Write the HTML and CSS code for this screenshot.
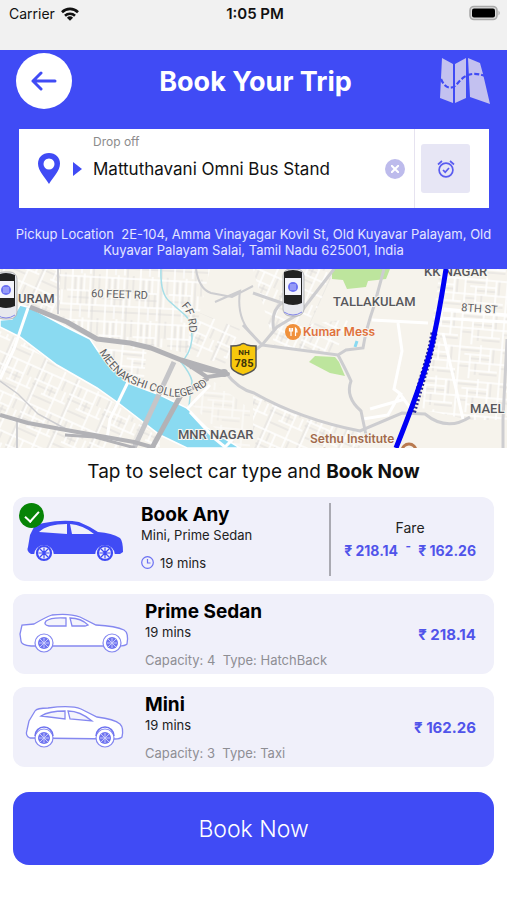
FILE: index.html
```html
<!DOCTYPE html>
<html lang="en">
  <head>
    <meta charset="UTF-8" />
    <meta name="viewport" content="width=device-width, initial-scale=1" />
    <title>Book Your Trip</title>
    <link rel="stylesheet" href="styles.css">
  </head>

  <body>
    <div class="statusBar">
      <div class="carrier">
        Carrier
        <svg width="18" height="14" viewBox="0 0 18 14">
          <g fill="none" stroke="#111" stroke-width="2.6">
            <path d="M1 5.2a11.4 11.4 0 0 1 16 0" />
            <path d="M4 8.7a7.2 7.2 0 0 1 10 0" />
          </g>
          <path d="M9 13.8L5.9 10.8a4.5 4.5 0 0 1 6.2 0z" fill="#111" />
        </svg>
      </div>
      <div class="clock">1:05 PM</div>
      <svg class="battery" width="32" height="16" viewBox="0 0 32 16">
        <rect x="1" y="1.5" width="27" height="13" rx="4" fill="#ddd" stroke="#aaa" stroke-width="1.6" />
        <rect x="3" y="3.5" width="23" height="9" rx="2" fill="#000" />
        <path d="M29.5 5.5q2.5 2.5 0 5z" fill="#aaa" />
      </svg>
    </div>

    <header>
      <div class="titleRow">
        <button class="backButton" aria-label="Back">
          <svg width="26" height="20" viewBox="0 0 26 20" fill="none" stroke="#404bf5" stroke-width="3" stroke-linecap="round" stroke-linejoin="round">
            <path d="M24 10H2M10 2L2 10l8 8" />
          </svg>
        </button>
        <h1>Book Your Trip</h1>
        <button class="mapButton" aria-label="Map">
          <svg width="52" height="48" viewBox="0 0 52 48">
            <path d="M3 1L14 7V46L1 41zM16 7L27 1V41L16 46zM29 1L41 6L44 17L51 47L31 40z" fill="#c3c1f0" />
            <path d="M2 22c4 10 11 11 16 5S30 13 46 19" fill="none" stroke="#404bf5" stroke-width="2.2" stroke-dasharray="5 2" />
          </svg>
        </button>
      </div>

      <div class="searchBox">
        <svg class="pin" width="22" height="31" viewBox="0 0 22 31">
          <path d="M11 0C4.5 0 0 4.5 0 10.5C0 18 7 24 11 31C15 24 22 18 22 10.5C22 4.5 17.5 0 11 0z" fill="#404bf5" />
          <circle cx="11" cy="11" r="5.5" fill="#fff" />
        </svg>
        <svg class="arrow" width="9" height="14" viewBox="0 0 9 14">
          <path d="M0 0l9 7-9 7z" fill="#404bf5" />
        </svg>
        <div class="dropField">
          <label for="dropOff">Drop off</label>
          <input id="dropOff" type="text" value="Mattuthavani Omni Bus Stand" />
        </div>
        <button class="clearButton" aria-label="Clear">
          <svg width="8" height="8" viewBox="0 0 8 8" stroke="#fff" stroke-width="2">
            <path d="M0 0l8 8M8 0L0 8" />
          </svg>
        </button>
        <div class="schedule">
          <button class="scheduleButton" aria-label="Schedule">
            <svg width="18" height="18" viewBox="0 0 18 18" fill="none" stroke="#5a5cf0" stroke-width="1.7">
              <circle cx="9" cy="10" r="6.9" />
              <path d="M1 4.5L5 1M17 4.5L13 1M6 10l2.2 2.2L12 8" />
            </svg>
          </button>
        </div>
      </div>

      <p class="pickup">Pickup Location&nbsp; 2E-104, Amma Vinayagar Kovil St, Old Kuyavar Palayam, Old Kuyavar Palayam Salai, Tamil Nadu 625001, India</p>
    </header>

    <svg class="map" viewBox="0 0 507 179">
      <defs>
        <pattern id="streetsA" width="34" height="44" patternUnits="userSpaceOnUse" patternTransform="rotate(3)">
          <path d="M8 3V17M14 3V44M20 17V31M26 0V44M32 0V17M1 24H23M0 37H34" stroke="#d9d8d8" stroke-width="0.8" fill="none" />
          <path d="M0 3H34M0 17H22M0 31H34M5 0V44M11 3V31M17 0V17M23 3V44M29 17V31M14 31V44" stroke="#fff" stroke-width="1.5" fill="none" />
        </pattern>
        <pattern id="streetsB" width="38" height="36" patternUnits="userSpaceOnUse" patternTransform="rotate(24)">
          <path d="M9 3V14M20 14V25M4 30H26M30 3V14M0 19H26M2 0V36" stroke="#d9d8d8" stroke-width="0.8" fill="none" />
          <path d="M0 3H38M0 14H26M12 25H38M4 0V36M15 3V25M26 0V36M34 14V25" stroke="#fff" stroke-width="1.5" fill="none" />
        </pattern>
        <pattern id="streetsC" width="42" height="34" patternUnits="userSpaceOnUse" patternTransform="rotate(5)">
          <path d="M3 6H24M14 14H34M3 22H14M20 18V30M24 29H42M37 3V18" stroke="#d9d8d8" stroke-width="0.8" fill="none" />
          <path d="M0 3H42M8 10H34M0 18H42M14 26H42M3 0V34M14 10V34M24 0V18M34 3V26" stroke="#fff" stroke-width="1.6" fill="none" />
        </pattern>
        <path id="collegeRoad" d="M99 83Q114 107 128 113T165 126T212 112" />
        <path id="ffRoad" d="M181 37Q190 45 189 68" />
        <g id="taxi">
          <rect x="-10" y="0" width="21" height="47" rx="7" fill="#e8e9ee" stroke="#aaa" stroke-width="0.8" />
          <path d="M-9 3Q0-1 9 3V34Q0 38-9 34z" fill="#222" />
          <rect x="-8" y="9" width="16" height="17" fill="#f4f4fb" />
          <circle cy="18" r="5" fill="#6a70f2" />
          <path d="M-3 16H3M-3 18H3M-3 20H3" stroke="#d5d8ff" stroke-width="0.8" />
          <path d="M-9 43Q0 49 9 43" fill="none" stroke="#8285e8" />
        </g>
      </defs>

      <rect width="507" height="179" fill="#f6f3ec" />

      <!-- street blocks -->
      <path d="M60 0H210L190 85L150 76L97 70L60 49z" fill="url(#streetsA)" />
      <path d="M0 0H60V45L20 36L0 30z" fill="url(#streetsB)" />
      <path d="M0 62L20 70L57 98L97 121L117 136L160 170V179H0z" fill="url(#streetsB)" />
      <path d="M195 42L240 60L225 95L185 85z" fill="url(#streetsB)" />
      <path d="M100 74L147 78L143 120L118 102z" fill="url(#streetsC)" />
      <path d="M253 0H335L310 55L350 50L335 85L275 79z" fill="url(#streetsB)" />
      <path d="M253 124L300 146L360 162V179H253z" fill="url(#streetsB)" />
      <path d="M440 0H507V151H470L420 140z" fill="url(#streetsC)" />
      <path d="M192 136L213 112L250 140V179H235z" fill="url(#streetsC)" opacity="0.6" />

      <!-- parks -->
      <path d="M332 0H390L386 10L368 12L366 18L347 20L343 11L332 10z" fill="#bde59d" />
      <path d="M315 87L335 88L339 93L345 107L330 104L309 93z" fill="#bde59d" />

      <!-- river and stream -->
      <path d="M0 51L12 50L20 36L31 39L66 58L90 70L98 82L128 114L160 126L187 139L207 159L240 179H187L160 166L117 133L97 119L57 96L20 68L0 58z" fill="#8adaf1" stroke="#fff" stroke-width="1.5" />
      <path d="M161 0Q160 24 169 32T185 46T192 70Q190 86 181 93Q190 104 192 112L189 137" fill="none" stroke="#a4dee8" stroke-width="1.5" />
      <path d="M357 72L355 78" stroke="#8adaf1" stroke-width="3" />

      <!-- white streets -->
      <g fill="none" stroke="#fff" stroke-width="3">
        <path d="M28 39L14 80L0 110" />
        <path d="M128 113L110 150L107 170" />
        <path d="M187 140L210 116M190 143L215 170L225 178L235 168" />
        <path d="M372 51L428 54M398 54L402 82L394 120L402 126" />
        <path d="M439 49L507 53M443 64L463 150M444 40L507 46" />
        <path d="M363 150L388 146L400 125L414 144M370 140L405 130" />
      </g>

      <!-- minor roads -->
      <g fill="none" stroke="#cdcdd0" stroke-width="2">
        <path d="M0 112L18 125L38 145L66 160" stroke-width="1.5" />
        <path d="M196 0Q199 20 211 24L232 28L253 17M215 33L240 22Q236 50 253 66" />
        <path d="M58 0V45M17 150V179" />
        <path d="M226 104Q238 120 254 124Q300 150 360 162L402 144L425 145Q447 163 470 148" stroke-width="3" />
        <path d="M232 98L262 76L277 58L300 44L334 0M253 24L282 34Q270 42 274 62M243 56L262 76" stroke-width="3" />
        <path d="M262 76L338 86L346 81L363 79Q366 60 374 37L384 0" stroke-width="3" />
        <path d="M338 86Q347 103 351 112Q345 128 361 142L366 166" stroke-width="3" />
        <path d="M507 70L503 150V179" stroke-width="3" />
      </g>

      <!-- highways -->
      <g fill="none" stroke="#b2b2b6" stroke-linejoin="round">
        <path d="M30 38L67 53L97 70L130 74L151 79L181 91L224 104" stroke-width="5" />
        <path d="M181 91L207 108L228 105L190 98" stroke-width="4" />
        <path d="M208 109L181 126L152 179" stroke-width="5" />
        <path d="M174 93L134 179" stroke="#c5c5c8" stroke-width="5" />
        <path d="M0 146L28 154L66 161L134 173L155 179" stroke-width="4" />
        <path d="M65 166L95 168L135 179" stroke-width="3" />
      </g>
      <circle cx="224" cy="104" r="4" fill="#b2b2b6" />

      <g class="mapLabel area">
        <text x="18" y="34">URAM</text>
        <text x="178" y="170">MNR NAGAR</text>
        <text x="333" y="37">TALLAKULAM</text>
        <text x="424" y="7">KK NAGAR</text>
        <text x="470" y="144">MAEL</text>
      </g>
      <g class="mapLabel road">
        <text x="91" y="28" transform="rotate(2 91 28)">60 FEET RD</text>
        <text x="461" y="42" transform="rotate(4 461 42)">8TH ST</text>
        <text><textPath href="#collegeRoad">MEENAKSHI COLLEGE RD</textPath></text>
        <text><textPath href="#ffRoad">FF RD</textPath></text>
      </g>

      <circle cx="293" cy="63" r="8" fill="#f0913c" />
      <path d="M291 59V67M289.5 59V62H292.5V59M295.5 67V59Q297 60 297 63H295.5" fill="none" stroke="#fff" stroke-width="1.2" />
      <text class="mapLabel food" x="303" y="67">Kumar Mess</text>
      <g class="mapLabel school">
        <text x="310" y="174">Sethu Institute</text>
        <text x="312" y="188">Of Technology</text>
      </g>
      <circle cx="409" cy="182" r="7" fill="none" stroke="#b97a50" stroke-width="3" />

      <!-- trip route -->
      <path d="M434 64Q431 80 429 87T412 145" fill="none" stroke="#2a2a90" stroke-width="7" stroke-dasharray="2 2" />
      <path d="M446 0Q437 58 429 87T396 179" fill="none" stroke="#0000f5" stroke-width="5" />

      <path d="M231 77Q237 77 240 76Q243 73 247 76Q250 77 256 77V97Q256 102 243 106Q231 102 231 97z" fill="#f8c80c" stroke="#555" stroke-width="1.5" />
      <text class="shieldTop" x="244" y="86">NH</text>
      <text class="shieldNumber" x="244" y="98">785</text>

      <use href="#taxi" x="6" y="3" />
      <use href="#taxi" x="293" y="0" />
    </svg>

    <form class="booking">
      <h2>Tap to select car type and <b>Book Now</b></h2>

      <label class="card anyCard">
        <input type="radio" name="carType" checked />
        <svg class="car" viewBox="0 0 112 46">
          <path d="M11 16L15 8Q17 5 25 4Q45 0 60 3Q70 7 79 13Q93 14 101 19Q104 22 104 33L101 35H12Q7 32 9 28L11 16z" fill="#404bf5" />
          <path d="M48 5V15L20 13Q28 5 48 5zM51 5Q64 6 75 15H53z" fill="#f0f0fa" />
          <path d="M15 36a10 10 0 0 1 20 0M76 36a10 10 0 0 1 20 0" fill="#f0f0fa" />
          <circle cx="25" cy="34" r="7" fill="#f0f0fa" stroke="#404bf5" stroke-width="2.2" />
          <circle cx="86" cy="34" r="7" fill="#f0f0fa" stroke="#404bf5" stroke-width="2.2" />
          <path d="M25 28.5V39.5M19.5 34H30.5M21 30L29 38M29 30L21 38M86 28.5V39.5M80.5 34H91.5M82 30L90 38M90 30L82 38" stroke="#404bf5" stroke-width="1.2" />
        </svg>
        <span class="details">
          <span class="name">Book Any</span>
          <span class="small">Mini, Prime Sedan</span>
          <span class="small wait">
            <svg width="13" height="13" viewBox="0 0 13 13" fill="none" stroke="#6a70f2" stroke-width="1.2">
              <circle cx="6.5" cy="6.5" r="5.8" />
              <path d="M6.5 3V7H9.5" />
            </svg>
            19 mins
          </span>
        </span>
        <span class="fare">
          <span class="fareLabel">Fare</span>
          <span class="price">₹ 218.14 <sup>-</sup> ₹ 162.26</span>
        </span>
      </label>

      <label class="card">
        <input type="radio" name="carType" />
        <svg class="car" viewBox="0 0 112 46">
          <path d="M12 35Q2 34 2 30L1 23L3 14L15 13Q27 6 33 4Q50 2 61 6L77 14Q97 15 105 19Q110 22 108 33Q106 35 100 35z" fill="#fff" stroke="#8588f0" stroke-width="1.3" />
          <path d="M47 7V15H30Q24 14 27 10Q32 6 47 7zM51 7Q62 7 69 14L66 15H53z" fill="#f4f4fc" stroke="#8588f0" stroke-width="1.3" />
          <g stroke="#8588f0" stroke-width="1.2" fill="#fff">
            <circle cx="25" cy="32" r="9" />
            <circle cx="93" cy="32" r="9" />
          </g>
          <circle cx="25" cy="32" r="6" fill="#6f74f0" />
          <circle cx="93" cy="32" r="6" fill="#6f74f0" />
          <path d="M25 27V37M20 32H30M21 28L29 36M29 28L21 36M93 27V37M88 32H98M89 28L97 36M97 28L89 36" stroke="#cfd1fb" stroke-width="0.9" />
        </svg>
        <span class="details">
          <span class="name">Prime Sedan</span>
          <span class="small">19 mins</span>
          <span class="extra">Capacity: 4&nbsp; Type: HatchBack</span>
        </span>
        <span class="price">₹ 218.14</span>
      </label>

      <label class="card">
        <input type="radio" name="carType" />
        <svg class="car" viewBox="0 0 112 46">
          <path d="M11 34Q6 32 8 26L10 17L16 7Q18 4 29 4Q52 1 62 5L78 13Q95 15 101 20Q105 24 103 33Q101 35 96 35z" fill="#fff" stroke="#8588f0" stroke-width="1.3" />
          <path d="M46 7V15L22 12Q30 7 46 7zM49 7Q61 7 73 17L51 15z" fill="#f4f4fc" stroke="#8588f0" stroke-width="1.3" />
          <g stroke="#8588f0" stroke-width="1.2" fill="#fff">
            <circle cx="25" cy="34" r="9" />
            <circle cx="86" cy="34" r="9" />
          </g>
          <path d="M16 32a9 9 0 0 1 18 0M77 32a9 9 0 0 1 18 0" fill="none" stroke="#6f74f0" stroke-width="1.5" />
          <circle cx="25" cy="34" r="6" fill="#6f74f0" />
          <circle cx="86" cy="34" r="6" fill="#6f74f0" />
          <path d="M25 29V39M20 34H30M21 30L29 38M29 30L21 38M86 29V39M81 34H91M82 30L90 38M90 30L82 38" stroke="#cfd1fb" stroke-width="0.9" />
        </svg>
        <span class="details">
          <span class="name">Mini</span>
          <span class="small">19 mins</span>
          <span class="extra">Capacity: 3&nbsp; Type: Taxi</span>
        </span>
        <span class="price">₹ 162.26</span>
      </label>

      <button type="button" class="bookButton">Book Now</button>
    </form>
  </body>
</html>
```

FILE: styles.css
```css
* {
  box-sizing: border-box;
}

body {
  margin: 0;
  background: #fff;
  color: #111;
  font-family: Inter, "Liberation Sans", sans-serif;
}

button {
  border: 0;
  padding: 0;
  font-family: inherit;
}

svg {
  display: block;
}

.statusBar {
  display: grid;
  grid-template-columns: 1fr auto 1fr;
  align-items: start;
  height: 50px;
  padding: 4px 6px 0 9px;
  background: #f1f1f1;
  font-size: 14px;
  line-height: 20px;
}

.carrier {
  display: flex;
  align-items: center;
  gap: 6px;
}

.clock {
  font-size: 15px;
  font-weight: 600;
}

.battery {
  justify-self: end;
  margin-top: 1px;
}

header {
  background: #404bf5;
  color: #fff;
  padding: 3px 0 11px;
}

.titleRow {
  display: flex;
  align-items: center;
  justify-content: space-between;
  padding: 0 16px;
}

.backButton {
  display: flex;
  align-items: center;
  justify-content: center;
  width: 56px;
  height: 56px;
  border-radius: 50%;
  background: #fff;
}

.mapButton {
  background: none;
}

h1 {
  margin: 0;
  font-size: 27px;
  font-weight: 700;
}

.searchBox {
  display: flex;
  align-items: center;
  height: 79px;
  margin: 20px 18px 0 19px;
  padding-left: 19px;
  background: #fff;
}

.arrow {
  margin: 0 11px 0 13px;
}

.dropField {
  flex: 1;
  align-self: flex-start;
  min-width: 0;
  padding-top: 4px;
}

.dropField label {
  display: block;
  color: #8c8c8c;
  font-size: 12px;
  line-height: 18px;
}

.dropField input {
  width: 100%;
  height: 36px;
  padding: 0;
  border: 0;
  outline: 0;
  background: none;
  color: #111;
  font-family: inherit;
  font-size: 17px;
}

.clearButton {
  display: flex;
  align-items: center;
  justify-content: center;
  width: 20px;
  height: 20px;
  border-radius: 50%;
  background: #bdbbec;
}

.schedule {
  display: flex;
  align-items: center;
  align-self: stretch;
  margin-left: 9px;
  padding: 0 19px 0 6px;
  border-left: 1px solid #e6e3f0;
}

.scheduleButton {
  display: flex;
  align-items: center;
  justify-content: center;
  width: 49px;
  height: 49px;
  border-radius: 3px;
  background: #e7e6f5;
}

.pickup {
  margin: 18px 4px 0;
  color: #e4e5ff;
  font-size: 13px;
  line-height: 16px;
  text-align: center;
}

.map {
  width: 100%;
  overflow: hidden;
}

.mapLabel {
  font-family: Roboto, sans-serif;
  paint-order: stroke;
  stroke: #f8f6f0;
  stroke-width: 2px;
}

.area {
  fill: #58585c;
  font-size: 13px;
  font-weight: 500;
}

.road {
  fill: #5c5c60;
  font-size: 11px;
}

.food,
.school {
  font-family: Inter, sans-serif;
  font-size: 12px;
  font-weight: 600;
}

.food {
  fill: #e0713c;
}

.school {
  fill: #a26a4c;
}

.shieldTop,
.shieldNumber {
  fill: #40350a;
  font-family: Roboto, sans-serif;
  font-weight: 700;
  text-anchor: middle;
}

.shieldTop {
  font-size: 8px;
}

.shieldNumber {
  font-size: 11px;
}

.booking {
  display: flex;
  flex-direction: column;
  gap: 13px;
  padding: 12px 13px 34px;
}

h2 {
  margin: 0;
  font-size: 19px;
  font-weight: 400;
  line-height: 24px;
  text-align: center;
}

.card {
  position: relative;
  display: flex;
  align-items: center;
  min-height: 80px;
  padding: 0 18px 0 6px;
  border-radius: 12px;
  background: #f0f0fa;
}

.card input {
  position: absolute;
  top: 6px;
  left: 6px;
  width: 25px;
  height: 25px;
  margin: 0;
  border-radius: 50%;
  appearance: none;
}

.card input:checked {
  background: #078407;
}

/* tick */
.card input:checked::after {
  content: "";
  position: absolute;
  top: 5px;
  left: 9px;
  width: 6px;
  height: 12px;
  border: solid #fff;
  border-width: 0 2px 2px 0;
  transform: rotate(42deg);
}

.car {
  flex: none;
  width: 112px;
  height: 46px;
}

.details {
  display: flex;
  flex: 1;
  flex-direction: column;
  margin-left: 14px;
}

.name {
  color: #000;
  font-size: 19px;
  font-weight: 700;
  line-height: 24px;
}

.small {
  color: #222;
  font-size: 13px;
  line-height: 16px;
}

.extra {
  margin-top: 12px;
  color: #8e8e94;
  font-size: 13px;
  line-height: 16px;
}

.price {
  color: #5054ea;
  font-size: 15px;
  font-weight: 700;
  white-space: nowrap;
}

.anyCard {
  min-height: 84px;
}

.anyCard .car {
  margin-top: 6px;
}

.anyCard .details {
  margin-left: 10px;
  padding-bottom: 5px;
}

.wait {
  display: flex;
  align-items: center;
  gap: 6px;
  margin-top: 12px;
}

.fare {
  display: flex;
  flex-direction: column;
  align-items: center;
  justify-content: center;
  gap: 7px;
  height: 73px;
  padding-left: 13px;
  border-left: 2px solid #aaaab2;
}

.fareLabel {
  color: #222;
  font-size: 14px;
  line-height: 16px;
}

.fare .price {
  font-size: 14px;
  line-height: 16px;
}

.fare sup {
  margin: 0 4px;
  line-height: 0;
}

.bookButton {
  height: 73px;
  margin-top: 12px;
  border-radius: 16px;
  background: #404bf5;
  color: #fff;
  font-size: 23px;
  font-weight: 300;
}
```
